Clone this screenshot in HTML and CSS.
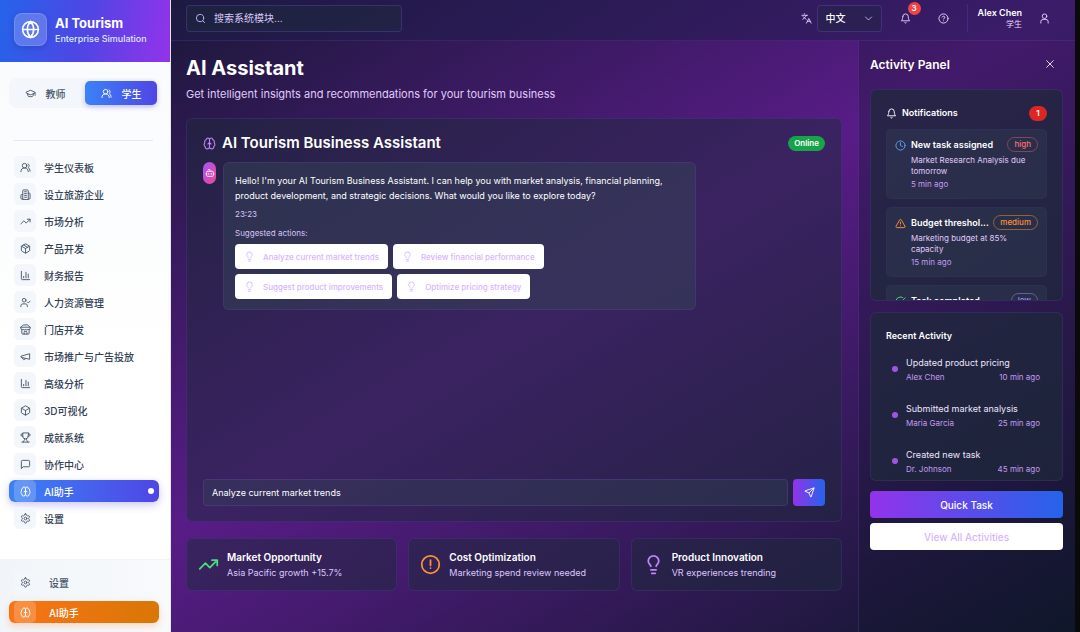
FILE: index.html
```html
<!DOCTYPE html>
<html lang="zh-CN">
<head>
  <meta charset="UTF-8" />
  <meta name="viewport" content="width=device-width, initial-scale=1" />
  <title>AI Tourism</title>
  <link rel="stylesheet" href="styles.css">
</head>
<body>
  <!-- Icons -->
  <svg class="sprite" aria-hidden="true">
    <symbol id="globe" viewBox="0 0 24 24"><circle cx="12" cy="12" r="10"/><path d="M12 2a14.5 14.5 0 0 0 0 20 14.5 14.5 0 0 0 0-20M2 12h20"/></symbol>
    <symbol id="cap" viewBox="0 0 24 24"><path d="M21.4 10.9a1 1 0 0 0 0-1.8l-8.6-3.9a2 2 0 0 0-1.6 0L2.6 9.1a1 1 0 0 0 0 1.8l8.6 3.9a2 2 0 0 0 1.6 0zM22 10v6M6 12.5V16a6 3 0 0 0 12 0v-3.500"/></symbol>
    <symbol id="users" viewBox="0 0 24 24"><path d="M18 21a8 8 0 0 0-16 0"/><circle cx="10" cy="8" r="5"/><path d="M22 20c0-3.400-2-6.500-4-8a5 5 0 0 0-.450-8.300"/></symbol>
    <symbol id="building" viewBox="0 0 24 24"><path d="M6 22V4a2 2 0 0 1 2-2h8a2 2 0 0 1 2 2v18zM6 12H4a2 2 0 0 0-2 2v6a2 2 0 0 0 2 2h2M18 9h2a2 2 0 0 1 2 2v9a2 2 0 0 1-2 2h-2M10 6h4M10 10h4M10 14h4M10 18h4"/></symbol>
    <symbol id="trend" viewBox="0 0 24 24"><path d="m22 7-8.500 8.500-5-5L2 17M16 7h6v6"/></symbol>
    <symbol id="package" viewBox="0 0 24 24"><path d="M11 21.730a2 2 0 0 0 2 0l7-4A2 2 0 0 0 21 16V8a2 2 0 0 0-1-1.730l-7-4a2 2 0 0 0-2 0l-7 4A2 2 0 0 0 3 8v8a2 2 0 0 0 1 1.730zM12 22V12M3.300 7 12 12l8.700-5M7.500 4.270l9 5.150"/></symbol>
    <symbol id="chart" viewBox="0 0 24 24"><path d="M3 3v16a2 2 0 0 0 2 2h16M18 17V9M13 17V5M8 17v-3"/></symbol>
    <symbol id="usercheck" viewBox="0 0 24 24"><path d="m16 11 2 2 4-4M16 21v-2a4 4 0 0 0-4-4H6a4 4 0 0 0-4 4v2"/><circle cx="9" cy="7" r="4"/></symbol>
    <symbol id="store" viewBox="0 0 24 24"><path d="m2 7 4.410-4.410A2 2 0 0 1 7.830 2h8.340a2 2 0 0 1 1.420.590L22 7M4 12v8a2 2 0 0 0 2 2h12a2 2 0 0 0 2-2v-8M15 22v-4a2 2 0 0 0-2-2h-2a2 2 0 0 0-2 2v4M2 7h20v3a2 2 0 0 1-2 2 2.700 2.700 0 0 1-2.700-1 2.700 2.700 0 0 1-5.300 0 2.700 2.700 0 0 1-5.300 0A2.700 2.700 0 0 1 4 12a2 2 0 0 1-2-2z"/></symbol>
    <symbol id="megaphone" viewBox="0 0 24 24"><path d="m3 11 18-5v12L3 14zM11.600 16.800a3 3 0 1 1-5.800-1.600"/></symbol>
    <symbol id="box" viewBox="0 0 24 24"><path d="M21 8a2 2 0 0 0-1-1.730l-7-4a2 2 0 0 0-2 0l-7 4A2 2 0 0 0 3 8v8a2 2 0 0 0 1 1.730l7 4a2 2 0 0 0 2 0l7-4A2 2 0 0 0 21 16zM3.300 7l8.700 5 8.700-5M12 22V12"/></symbol>
    <symbol id="trophy" viewBox="0 0 24 24"><path d="M6 9H4.500a2.500 2.500 0 0 1 0-5H6M18 9h1.500a2.500 2.500 0 0 0 0-5H18M4 22h16M10 14.660V17c0 .550-.470.980-.970 1.210C7.850 18.750 7 20.240 7 22M14 14.660V17c0 .550.470.980.970 1.210C16.150 18.750 17 20.240 17 22M18 2H6v7a6 6 0 0 0 12 0z"/></symbol>
    <symbol id="message" viewBox="0 0 24 24"><path d="M21 15a2 2 0 0 1-2 2H7l-4 4V5a2 2 0 0 1 2-2h14a2 2 0 0 1 2 2z"/></symbol>
    <symbol id="brain" viewBox="0 0 24 24"><path d="M12 5a3 3 0 1 0-5.997.125 4 4 0 0 0-2.526 5.770 4 4 0 0 0 .556 6.588A4 4 0 1 0 12 18zM12 5a3 3 0 1 1 5.997.125 4 4 0 0 1 2.526 5.770 4 4 0 0 1-.556 6.588A4 4 0 1 1 12 18zM15 13a4.500 4.500 0 0 1-3-4 4.500 4.500 0 0 1-3 4"/></symbol>
    <symbol id="settings" viewBox="0 0 24 24"><path d="M12.220 2h-.440a2 2 0 0 0-2 2v.180a2 2 0 0 1-1 1.730l-.430.250a2 2 0 0 1-2 0l-.150-.080a2 2 0 0 0-2.730.730l-.220.380a2 2 0 0 0 .730 2.730l.150.100a2 2 0 0 1 1 1.720v.510a2 2 0 0 1-1 1.740l-.150.090a2 2 0 0 0-.730 2.730l.220.380a2 2 0 0 0 2.730.730l.150-.080a2 2 0 0 1 2 0l.430.250a2 2 0 0 1 1 1.730V20a2 2 0 0 0 2 2h.440a2 2 0 0 0 2-2v-.180a2 2 0 0 1 1-1.730l.430-.250a2 2 0 0 1 2 0l.150.080a2 2 0 0 0 2.730-.730l.220-.390a2 2 0 0 0-.730-2.730l-.150-.080a2 2 0 0 1-1-1.740v-.500a2 2 0 0 1 1-1.740l.150-.090a2 2 0 0 0 .730-2.730l-.220-.380a2 2 0 0 0-2.730-.730l-.150.080a2 2 0 0 1-2 0l-.430-.250a2 2 0 0 1-1-1.730V4a2 2 0 0 0-2-2z"/><circle cx="12" cy="12" r="3"/></symbol>
    <symbol id="search" viewBox="0 0 24 24"><circle cx="11" cy="11" r="8"/><path d="m21 21-4.300-4.300"/></symbol>
    <symbol id="languages" viewBox="0 0 24 24"><path d="m5 8 6 6M4 14l6-6 2-3M2 5h12M7 2h1M22 22l-5-10-5 10M14 18h6"/></symbol>
    <symbol id="chevron" viewBox="0 0 24 24"><path d="m4 8 8 8 8-8"/></symbol>
    <symbol id="bell" viewBox="0 0 24 24"><path d="M6 8a6 6 0 0 1 12 0c0 7 3 9 3 9H3s3-2 3-9M10.300 21a1.940 1.940 0 0 0 3.400 0"/></symbol>
    <symbol id="help" viewBox="0 0 24 24"><circle cx="12" cy="12" r="10"/><path d="M9.090 9a3 3 0 0 1 5.830 1c0 2-3 3-3 3M12 17h.010"/></symbol>
    <symbol id="user" viewBox="0 0 24 24"><circle cx="12" cy="7" r="5"/><path d="M4 22v-3a5 5 0 0 1 5-5h6a5 5 0 0 1 5 5v3"/></symbol>
    <symbol id="close" viewBox="0 0 24 24"><path d="M20 4 4 20M4 4l16 16"/></symbol>
    <symbol id="clock" viewBox="0 0 24 24"><circle cx="12" cy="12" r="10"/><path d="M12 6v6l4 2"/></symbol>
    <symbol id="warning" viewBox="0 0 24 24"><path d="m21.730 18-8-14a2 2 0 0 0-3.480 0l-8 14A2 2 0 0 0 4 21h16a2 2 0 0 0 1.730-3M12 9v4M12 17h.010"/></symbol>
    <symbol id="check" viewBox="0 0 24 24"><path d="M21.800 10A10 10 0 1 1 17 3.340M9 11l3 3L22 4"/></symbol>
    <symbol id="bot" viewBox="0 0 24 24"><path d="M12 8V4H8"/><rect x="4" y="8" width="16" height="12" rx="2"/><path d="M2 14h2M20 14h2M15 13v2M9 13v2"/></symbol>
    <symbol id="bulb" viewBox="0 0 24 24"><path d="M15 14c.200-1 .700-1.700 1.500-2.500 1-.900 1.500-2.200 1.500-3.500A6 6 0 0 0 6 8c0 1 .200 2.200 1.500 3.500.700.700 1.300 1.500 1.500 2.500M9 18h6M10 22h4"/></symbol>
    <symbol id="send" viewBox="0 0 24 24"><path d="M14.540 21.690a.5.5 0 0 0 .930-.020l6.500-19a.5.5 0 0 0-.640-.640l-19 6.500a.5.5 0 0 0-.020.940l7.930 3.180a2 2 0 0 1 1.110 1.110zM21.850 2.150l-10.940 10.940"/></symbol>
    <symbol id="alert" viewBox="0 0 24 24"><circle cx="12" cy="12" r="10"/><path d="M12 7v6M12 16h.010"/></symbol>
  </svg>

  <div class="app">
    <aside class="sidebar">
      <div class="brand">
        <div class="brand-icon"><svg class="icon"><use href="#globe"/></svg></div>
        <div>
          <div class="brand-name">AI Tourism</div>
          <div class="brand-sub">Enterprise Simulation</div>
        </div>
      </div>

      <div class="roles">
        <button class="role"><svg class="icon"><use href="#cap"/></svg>教师</button>
        <button class="role active"><svg class="icon"><use href="#users"/></svg>学生</button>
      </div>

      <nav class="nav">
        <a href="#" class="nav-link"><span class="tile"><svg class="icon"><use href="#users"/></svg></span>学生仪表板</a>
        <a href="#" class="nav-link"><span class="tile"><svg class="icon"><use href="#building"/></svg></span>设立旅游企业</a>
        <a href="#" class="nav-link"><span class="tile"><svg class="icon"><use href="#trend"/></svg></span>市场分析</a>
        <a href="#" class="nav-link"><span class="tile"><svg class="icon"><use href="#package"/></svg></span>产品开发</a>
        <a href="#" class="nav-link"><span class="tile"><svg class="icon"><use href="#chart"/></svg></span>财务报告</a>
        <a href="#" class="nav-link"><span class="tile"><svg class="icon"><use href="#usercheck"/></svg></span>人力资源管理</a>
        <a href="#" class="nav-link"><span class="tile"><svg class="icon"><use href="#store"/></svg></span>门店开发</a>
        <a href="#" class="nav-link"><span class="tile"><svg class="icon"><use href="#megaphone"/></svg></span>市场推广与广告投放</a>
        <a href="#" class="nav-link"><span class="tile"><svg class="icon"><use href="#chart"/></svg></span>高级分析</a>
        <a href="#" class="nav-link"><span class="tile"><svg class="icon"><use href="#box"/></svg></span>3D可视化</a>
        <a href="#" class="nav-link"><span class="tile"><svg class="icon"><use href="#trophy"/></svg></span>成就系统</a>
        <a href="#" class="nav-link"><span class="tile"><svg class="icon"><use href="#message"/></svg></span>协作中心</a>
        <a href="#" class="nav-link active"><span class="tile"><svg class="icon"><use href="#brain"/></svg></span>AI助手<span class="dot"></span></a>
        <a href="#" class="nav-link"><span class="tile"><svg class="icon"><use href="#settings"/></svg></span>设置</a>
      </nav>

      <div class="side-footer">
        <button class="side-btn"><span class="tile"><svg class="icon"><use href="#settings"/></svg></span>设置</button>
        <button class="side-btn orange"><span class="tile"><svg class="icon"><use href="#brain"/></svg></span>AI助手</button>
      </div>
    </aside>

    <div class="content">
      <header class="topbar">
        <label class="search">
          <svg class="icon"><use href="#search"/></svg>
          <input type="text" placeholder="搜索系统模块..." aria-label="搜索系统模块">
        </label>
        <div class="tools">
          <label class="lang">
            <svg class="icon"><use href="#languages"/></svg>
            <span class="lang-box">
              <select aria-label="语言"><option>中文</option><option>English</option></select>
              <svg class="icon lang-arrow"><use href="#chevron"/></svg>
            </span>
          </label>
          <button class="tool" aria-label="通知"><svg class="icon"><use href="#bell"/></svg><span class="count">3</span></button>
          <button class="tool" aria-label="帮助"><svg class="icon"><use href="#help"/></svg></button>
          <div class="account">
            <div>
              <div class="account-name">Alex Chen</div>
              <div class="account-role">学生</div>
            </div>
            <button class="tool" aria-label="Alex Chen"><svg class="icon"><use href="#user"/></svg></button>
          </div>
        </div>
      </header>

      <div class="columns">
        <main class="main">
          <h1>AI Assistant</h1>
          <p class="lead">Get intelligent insights and recommendations for your tourism business</p>

          <section class="chat">
            <div class="chat-head">
              <svg class="icon"><use href="#brain"/></svg>
              <h2>AI Tourism Business Assistant</h2>
              <span class="online">Online</span>
            </div>
            <div class="messages">
              <div class="avatar"><svg class="icon"><use href="#bot"/></svg></div>
              <div class="bubble">
                <p>Hello! I'm your AI Tourism Business Assistant. I can help you with market analysis, financial planning, product development, and strategic decisions. What would you like to explore today?</p>
                <div class="time">23:23</div>
                <div class="hint">Suggested actions:</div>
                <div class="actions">
                  <button class="action"><svg class="icon"><use href="#bulb"/></svg>Analyze current market trends</button>
                  <button class="action"><svg class="icon"><use href="#bulb"/></svg>Review financial performance</button>
                  <button class="action"><svg class="icon"><use href="#bulb"/></svg>Suggest product improvements</button>
                  <button class="action"><svg class="icon"><use href="#bulb"/></svg>Optimize pricing strategy</button>
                </div>
              </div>
            </div>
            <div class="composer">
              <input type="text" value="Analyze current market trends" aria-label="Message">
              <button class="send" aria-label="Send"><svg class="icon"><use href="#send"/></svg></button>
            </div>
          </section>

          <div class="cards">
            <div class="card">
              <svg class="icon green"><use href="#trend"/></svg>
              <div><h3>Market Opportunity</h3><p>Asia Pacific growth +15.7%</p></div>
            </div>
            <div class="card">
              <svg class="icon amber"><use href="#alert"/></svg>
              <div><h3>Cost Optimization</h3><p>Marketing spend review needed</p></div>
            </div>
            <div class="card">
              <svg class="icon violet"><use href="#bulb"/></svg>
              <div><h3>Product Innovation</h3><p>VR experiences trending</p></div>
            </div>
          </div>
        </main>

        <aside class="panel">
          <div class="panel-head">
            <h2>Activity Panel</h2>
            <button class="close" aria-label="Close"><svg class="icon"><use href="#close"/></svg></button>
          </div>

          <section class="box notifications">
            <div class="box-head">
              <svg class="icon"><use href="#bell"/></svg>
              <h3>Notifications</h3>
              <span class="unread">1</span>
            </div>
            <div class="notes">
              <div class="note">
                <svg class="icon blue"><use href="#clock"/></svg>
                <div class="note-body">
                  <div class="note-title"><strong>New task assigned</strong><span class="tag high">high</span></div>
                  <p>Market Research Analysis due tomorrow</p>
                  <time>5 min ago</time>
                </div>
              </div>
              <div class="note">
                <svg class="icon amber"><use href="#warning"/></svg>
                <div class="note-body">
                  <div class="note-title"><strong>Budget threshol...</strong><span class="tag medium">medium</span></div>
                  <p>Marketing budget at 85% capacity</p>
                  <time>15 min ago</time>
                </div>
              </div>
              <div class="note">
                <svg class="icon green"><use href="#check"/></svg>
                <div class="note-body">
                  <div class="note-title"><strong>Task completed</strong><span class="tag low">low</span></div>
                </div>
              </div>
            </div>
          </section>

          <section class="box recent">
            <h3>Recent Activity</h3>
            <ul>
              <li><div>Updated product pricing</div><div class="meta"><span>Alex Chen</span><time>10 min ago</time></div></li>
              <li><div>Submitted market analysis</div><div class="meta"><span>Maria Garcia</span><time>25 min ago</time></div></li>
              <li><div>Created new task</div><div class="meta"><span>Dr. Johnson</span><time>45 min ago</time></div></li>
            </ul>
          </section>

          <div class="panel-actions">
            <button class="wide primary">Quick Task</button>
            <button class="wide">View All Activities</button>
          </div>
        </aside>
      </div>
    </div>
  </div>
</body>
</html>
```
FILE: styles.css
```css
* {
  box-sizing: border-box;
}

body {
  margin: 0;
  background: #0a0a0a;
  font-family: Inter, "Noto Sans CJK SC", sans-serif;
  font-size: 10px;
  color: #fff;
}

h1, h2, h3, p, ul {
  margin: 0;
  padding: 0;
}

button, input, select {
  font: inherit;
  color: inherit;
  margin: 0;
}

button {
  border: none;
  background: none;
  padding: 0;
  cursor: pointer;
}

.sprite {
  position: absolute;
  width: 0;
  height: 0;
}

.icon {
  width: 11px;
  height: 11px;
  flex-shrink: 0;
  fill: none;
  stroke: currentColor;
  stroke-width: 2;
  stroke-linecap: round;
  stroke-linejoin: round;
}

.app {
  display: flex;
  min-height: 100vh;
  margin-right: 5px;
  background: linear-gradient(to bottom right, #0f172a, #581c87 50%, #0f172a);
}

/* Sidebar */
.sidebar {
  display: flex;
  flex-direction: column;
  width: 171px;
  flex-shrink: 0;
  background: linear-gradient(#f8fafc, #fff 60%);
  border-right: 1px solid #e2e8f0;
  color: #334155;
}

.brand {
  display: flex;
  align-items: center;
  gap: 8px;
  height: 62px;
  padding: 0 14px 3px;
  background: linear-gradient(100deg, #2563eb, #4f46e5 50%, #9333ea);
  color: #fff;
}

.brand-icon {
  display: flex;
  align-items: center;
  justify-content: center;
  width: 33px;
  height: 33px;
  border: 1px solid rgba(255, 255, 255, 0.15);
  border-radius: 8px;
  background: rgba(255, 255, 255, 0.2);
  box-shadow: 0 2px 6px rgba(0, 0, 0, 0.15);
}

.brand-icon .icon {
  width: 19px;
  height: 19px;
}

.brand-name {
  font-size: 13px;
  line-height: 18px;
  font-weight: 700;
}

.brand-sub {
  font-size: 9px;
  line-height: 14px;
  font-weight: 500;
  color: #dbeafe;
}

.roles {
  display: flex;
  gap: 4px;
  margin: 16px 13px 0 9px;
  padding: 3px 0;
  border-radius: 8px;
  background: #f3f6fa;
}

.role {
  display: flex;
  flex: 1;
  align-items: center;
  justify-content: center;
  gap: 10px;
  height: 24px;
  border-radius: 5px;
  font-weight: 500;
  color: #475569;
}

.role.active {
  background: linear-gradient(90deg, #3b82f6, #4f46e5);
  box-shadow: 0 2px 5px rgba(79, 70, 229, 0.3);
  color: #fff;
}

.nav {
  display: flex;
  flex-direction: column;
  gap: 5px;
  margin-top: 32px;
  padding: 0 11px 0 9px;
}

.nav::before {
  content: "";
  height: 1px;
  margin: 0 6px 10px 5px;
  background: #e2e8f0;
}

.nav-link, .side-btn {
  display: flex;
  align-items: center;
  gap: 8px;
  height: 22px;
  padding: 0 5px;
  border-radius: 6px;
  font-weight: 500;
  color: #334155;
  text-decoration: none;
}

.tile {
  display: flex;
  align-items: center;
  justify-content: center;
  width: 22px;
  height: 22px;
  border-radius: 5px;
  background: #f3f6fa;
  color: #475569;
}

.nav-link.active {
  background: linear-gradient(90deg, #3b82f6, #4f46e5);
  box-shadow: 0 3px 8px rgba(79, 70, 229, 0.3);
  color: #fff;
}

.active .tile, .orange .tile {
  background: rgba(255, 255, 255, 0.2);
  color: #fff;
}

.dot {
  width: 6px;
  height: 6px;
  margin-left: auto;
  border-radius: 50%;
  background: #fff;
}

.side-footer {
  display: flex;
  flex-direction: column;
  gap: 8px;
  margin-top: auto;
  padding: 11px 11px 9px 9px;
  border-top: 1px solid #f1f5f9;
  background: linear-gradient(90deg, #f1f5f9, #f8fafc);
}

.side-btn {
  gap: 13px;
  color: #475569;
}

.side-btn.orange {
  background: linear-gradient(90deg, #f97316, #d97706);
  box-shadow: 0 3px 7px rgba(249, 115, 22, 0.25);
  color: #fff;
}

/* Top bar */
.content {
  display: flex;
  flex: 1;
  flex-direction: column;
  min-width: 0;
}

.topbar {
  display: flex;
  align-items: center;
  justify-content: space-between;
  height: 41px;
  padding: 0 15px 4px;
  border-bottom: 1px solid rgba(168, 85, 247, 0.15);
  background: rgba(30, 27, 75, 0.5);
}

.search {
  display: flex;
  align-items: center;
  gap: 8px;
  width: 216px;
  height: 27px;
  padding: 0 8px;
  border: 1px solid rgba(139, 92, 246, 0.25);
  border-radius: 4px;
  background: rgba(30, 41, 59, 0.5);
  color: #c4b5fd;
}

.search input {
  flex: 1;
  min-width: 0;
  border: none;
  outline: none;
  padding: 0;
  background: none;
}

.search input::placeholder {
  color: #d8c8f5;
  opacity: 1;
}

.tools, .lang, .account {
  display: flex;
  align-items: center;
}

.tools {
  color: #e9d5ff;
}

.lang {
  gap: 5px;
}

.lang-box {
  position: relative;
}

.lang-box select {
  display: block;
  width: 65px;
  height: 27px;
  padding: 0 8px;
  border: 1px solid rgba(139, 92, 246, 0.25);
  border-radius: 4px;
  background: rgba(30, 41, 59, 0.4);
  appearance: none;
  font-weight: 500;
  color: #fff;
}

.lang-arrow {
  position: absolute;
  top: 9px;
  right: 9px;
  width: 9px;
  height: 9px;
  pointer-events: none;
}

.tool {
  position: relative;
  display: flex;
  margin-left: 27px;
}

.lang + .tool {
  margin-left: 18px;
}

.count {
  position: absolute;
  top: -11px;
  left: 8px;
  width: 13px;
  height: 13px;
  border-radius: 50%;
  background: #ef4444;
  font-size: 8px;
  line-height: 13px;
  font-weight: 600;
  color: #fff;
}

.account {
  height: 28px;
  margin-left: 18px;
  padding: 0 10px;
  border-left: 1px solid rgba(139, 92, 246, 0.2);
  text-align: right;
}

.account-name {
  font-size: 9px;
  line-height: 13px;
  font-weight: 600;
  color: #fff;
}

.account-role {
  font-size: 8px;
  line-height: 11px;
}

.account .tool {
  margin-left: 17px;
}

/* Main column */
.columns {
  display: flex;
  flex: 1;
}

.main {
  flex: 1;
  min-width: 0;
  padding: 14px 16px 14px 15px;
}

h1 {
  font-size: 20px;
  line-height: 26px;
  font-weight: 700;
}

.lead {
  margin-top: 5px;
  font-size: 11px;
  line-height: 16px;
  color: #e0ccfb;
}

.chat, .card, .box {
  border: 1px solid rgba(139, 92, 246, 0.15);
  border-radius: 6px;
  background: rgba(30, 41, 59, 0.5);
}

.chat {
  margin-top: 16px;
  padding: 15px 16px;
}

.chat-head {
  display: flex;
  align-items: center;
  gap: 6px;
  height: 18px;
}

.chat-head .icon {
  width: 13px;
  height: 13px;
  color: #c084fc;
}

.chat-head h2 {
  font-size: 15px;
  line-height: 18px;
  font-weight: 600;
}

.online {
  margin-left: auto;
  padding: 0 6px;
  border-radius: 8px;
  background: #16a34a;
  font-size: 8px;
  line-height: 15px;
  font-weight: 600;
}

.messages {
  display: flex;
  align-items: flex-start;
  gap: 7px;
  min-height: 317px;
  margin-top: 10px;
}

.avatar {
  display: flex;
  align-items: center;
  justify-content: center;
  width: 13px;
  height: 22px;
  border-radius: 7px;
  background: linear-gradient(120deg, #a855f7, #ec4899);
}

.avatar .icon {
  width: 10px;
  height: 10px;
}

.bubble {
  width: 76%;
  padding: 10px 11px;
  border: 1px solid rgba(139, 92, 246, 0.15);
  border-radius: 6px;
  background: rgba(51, 65, 85, 0.5);
}

.bubble p {
  font-size: 9px;
  line-height: 15px;
}

.time, .hint {
  font-size: 8px;
  line-height: 11px;
  color: #d8c4f5;
}

.time {
  margin-top: 6px;
}

.hint {
  margin-top: 8px;
}

.actions {
  display: flex;
  flex-wrap: wrap;
  gap: 5px;
  margin-top: 5px;
}

.action {
  display: flex;
  align-items: center;
  gap: 8px;
  height: 25px;
  padding: 0 9px;
  border-radius: 4px;
  background: #fff;
  font-size: 8px;
  font-weight: 500;
  color: #d8b4fe;
}

.composer {
  display: flex;
  gap: 5px;
}

.composer input {
  flex: 1;
  min-width: 0;
  height: 27px;
  padding: 0 8px;
  border: 1px solid rgba(139, 92, 246, 0.2);
  border-radius: 4px;
  outline: none;
  background: rgba(51, 65, 85, 0.4);
  font-size: 9px;
}

.send {
  display: flex;
  align-items: center;
  justify-content: center;
  width: 32px;
  border-radius: 4px;
  background: linear-gradient(90deg, #9333ea, #2563eb);
}

.cards {
  display: grid;
  grid-template-columns: repeat(3, 1fr);
  gap: 11px;
  margin-top: 16px;
}

.card {
  display: flex;
  align-items: center;
  gap: 8px;
  height: 53px;
  padding: 0 11px;
}

.card .icon {
  width: 21px;
  height: 21px;
}

.card h3 {
  font-size: 10px;
  line-height: 15px;
  font-weight: 600;
}

.card p {
  font-size: 9px;
  line-height: 15px;
  color: #dcc8fa;
}

.icon.green { color: #4ade80; }
.icon.amber { color: #fb923c; }
.icon.violet { color: #c084fc; }
.icon.blue { color: #60a5fa; }

/* Activity panel */
.panel {
  width: 217px;
  flex-shrink: 0;
  padding: 14px 12px 14px 11px;
  border-left: 1px solid rgba(139, 92, 246, 0.2);
  background: rgba(15, 23, 42, 0.3);
}

.panel-head {
  display: flex;
  align-items: center;
  justify-content: space-between;
  height: 18px;
  padding-right: 8px;
}

.panel-head h2 {
  font-size: 12px;
  font-weight: 600;
}

.close {
  display: flex;
}

.close .icon {
  width: 10px;
  height: 10px;
}

.box {
  background: rgba(30, 41, 59, 0.7);
}

.notifications {
  height: 212px;
  margin-top: 16px;
  padding: 15px 15px 0;
  overflow: hidden;
}

.box h3 {
  font-size: 9px;
  line-height: 16px;
  font-weight: 600;
}

.box-head {
  display: flex;
  align-items: center;
  gap: 5px;
}

.unread {
  margin-left: auto;
  width: 18px;
  border-radius: 8px;
  background: #dc2626;
  font-size: 8px;
  line-height: 15px;
  font-weight: 600;
  text-align: center;
}

.notes {
  display: flex;
  flex-direction: column;
  gap: 8px;
  margin-top: 8px;
}

.note {
  display: flex;
  gap: 5px;
  padding: 7px 8px 8px;
  border: 1px solid rgba(139, 92, 246, 0.06);
  border-radius: 5px;
  background: rgba(51, 65, 85, 0.35);
}

.note > .icon {
  margin-top: 3px;
}

.note-body {
  flex: 1;
  min-width: 0;
}

.note-title {
  display: flex;
  align-items: center;
  justify-content: space-between;
  gap: 4px;
  height: 15px;
}

.note-title strong {
  font-size: 9px;
  font-weight: 600;
  white-space: nowrap;
}

.tag {
  padding: 0 6px;
  border: 1px solid currentColor;
  border-radius: 8px;
  font-size: 8px;
  line-height: 13px;
  font-weight: 500;
}

.tag.high { color: #f87171; border-color: rgba(248, 113, 113, 0.4); }
.tag.medium { color: #fb923c; border-color: rgba(251, 146, 60, 0.5); }
.tag.low { color: #a78bfa; border-color: rgba(167, 139, 250, 0.5); }

.note p {
  margin-top: 3px;
  font-size: 8px;
  line-height: 11px;
  color: #e0ccfb;
}

.note time {
  display: block;
  margin-top: 2px;
  font-size: 8px;
  line-height: 11px;
  color: #c49bf0;
}

.recent {
  height: 169px;
  margin-top: 11px;
  padding: 15px;
  overflow: hidden;
}

.recent ul {
  display: flex;
  flex-direction: column;
  gap: 17px;
  margin-top: 11px;
  list-style: none;
}

.recent li {
  position: relative;
  padding: 0 7px 0 20px;
  font-size: 9px;
  line-height: 15px;
  color: #ede4fd;
}

.recent li::before {
  content: "";
  position: absolute;
  top: 11px;
  left: 6px;
  width: 6px;
  height: 6px;
  border-radius: 50%;
  background: #a055e0;
}

.meta {
  display: flex;
  justify-content: space-between;
  font-size: 8px;
  line-height: 14px;
  color: #c49bf0;
}

.panel-actions {
  display: flex;
  flex-direction: column;
  gap: 5px;
  margin-top: 10px;
}

.wide {
  height: 27px;
  border-radius: 4px;
  background: #fff;
  font-size: 10px;
  font-weight: 500;
  color: #d8b4fe;
}

.wide.primary {
  background: linear-gradient(90deg, #9333ea, #2563eb);
  color: #fff;
}
```
